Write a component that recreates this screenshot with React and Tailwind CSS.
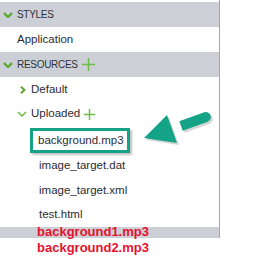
import React from "react";

const font = { fontFamily: '"Liberation Sans", Arial, sans-serif' };

function ChevronDown({ bold }) {
    return (
        <svg width="10" height="6" viewBox="0 0 10 6" className="shrink-0">
            <polyline
                points="1,1 5,5 9,1"
                fill="none"
                stroke={bold ? "#5aa832" : "#6dbb45"}
                strokeWidth={bold ? 2.4 : 1.5}
            />
        </svg>
    );
}

function ChevronRight() {
    return (
        <svg width="6" height="8" viewBox="0 0 6 8" className="shrink-0">
            <polyline points="1,0.8 4.4,4 1,7.2" fill="none" stroke="#5aa832" strokeWidth="2" />
        </svg>
    );
}

function Plus({ size }) {
    return (
        <svg width={size} height={size} viewBox={`0 0 ${size} ${size}`} className="shrink-0">
            <line x1="0" y1={size / 2} x2={size} y2={size / 2} stroke="#6cc04a" strokeWidth="1.5" />
            <line x1={size / 2} y1="0" x2={size / 2} y2={size} stroke="#6cc04a" strokeWidth="1.5" />
        </svg>
    );
}

function Header({ label, plus }) {
    return (
        <div className="h-[25px] bg-[#ccd0d6] flex items-center pl-[3px] gap-[4px] text-[10px] tracking-[-0.3px] text-[#2f3338]">
            <ChevronDown bold />
            <span>{label}</span>
            {plus && <Plus size={13} />}
        </div>
    );
}

function File({ name, h = "h-[25px]" }) {
    return (
        <div className={`${h} flex items-center pl-[39px]`}>{name}</div>
    );
}

export default function App() {
    return (
        <div className="relative w-[258px] h-[275px] bg-white overflow-hidden text-[11.5px] text-[#2b2b33]" style={font}>
            {/* tree panel */}
            <div className="w-[220px] h-[238px] border-r border-[#a3a7ab] pt-[2px] flex flex-col">
                <Header label="STYLES" />
                <div className="h-[25px] flex items-center pl-[17px]">Application</div>
                <Header label="RESOURCES" plus />
                <div className="h-[25px] flex items-center pl-[20px] gap-[5px]">
                    <ChevronRight />
                    <span>Default</span>
                </div>
                <div className="h-[24px] flex items-center pl-[17px] gap-[4px]">
                    <ChevronDown />
                    <span>Uploaded</span>
                    <Plus size={11} />
                </div>
                <div className="h-[2px]" />
                <div className="ml-[30px] w-[100px] h-[25px] border-[3px] border-[#15a387] flex items-center pl-[5px] shadow-[2px_2px_2px_rgba(0,0,0,0.25)]">
                    background.mp3
                </div>
                <File name="image_target.dat" />
                <File name="image_target.xml" />
                <File name="test.html" h="h-[24px]" />
                <div className="flex-1 bg-[#ccd0d6]" />
            </div>

            {/* red annotations */}
            <div className="absolute left-[37px] top-[224px] text-[13px] leading-[16px] font-bold text-[#e8112d]">
                <div>background1.mp3</div>
                <div>background2.mp3</div>
            </div>

            {/* arrow pointing at the highlighted file */}
            <svg className="absolute left-[140px] top-[108px]" width="75" height="40" viewBox="0 0 75 40">
                <g fill="#8a8a8a" opacity="0.35" transform="translate(2 2)">
                    <polygon points="27,7 4,30 37,35" />
                    <path d="M39.3 13.3 L64.3 4.3 A5 5 0 0 1 67.7 13.7 L42.7 22.7 Z" />
                </g>
                <g fill="#15a387">
                    <polygon points="27,7 4,30 37,35" />
                    <path d="M39.3 13.3 L64.3 4.3 A5 5 0 0 1 67.7 13.7 L42.7 22.7 Z" />
                </g>
            </svg>
        </div>
    );
}
